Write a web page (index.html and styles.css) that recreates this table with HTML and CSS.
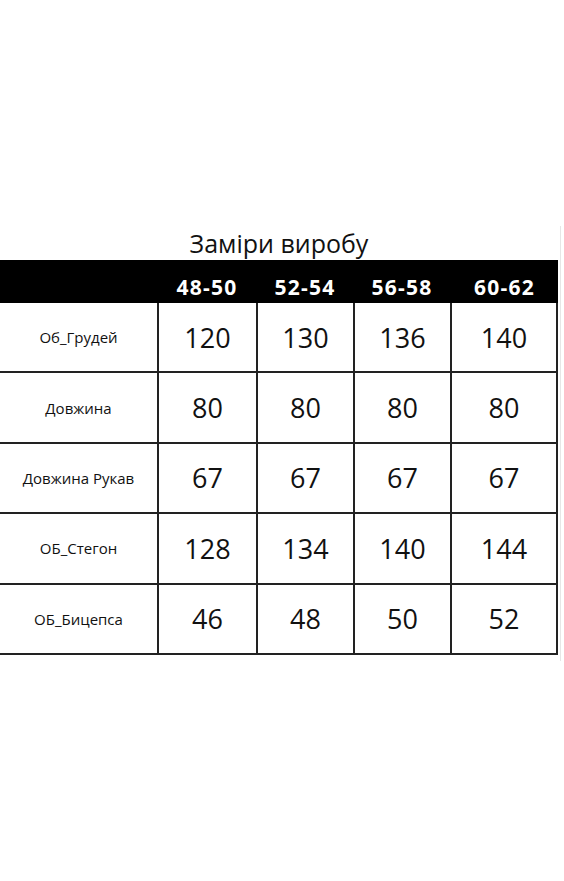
FILE: index.html
```html
<!DOCTYPE html>
<html lang="uk">
<head>
<meta charset="utf-8">
<link rel="stylesheet" href="styles.css">
</head>
<body>
<div class="page">
  <div class="sheet">
    <div class="title">Заміри виробу</div>
    <div class="head">
      <div></div>
      <div>48-50</div>
      <div>52-54</div>
      <div>56-58</div>
      <div>60-62</div>
    </div>
    <div class="row">
      <div class="label">Об_Грудей</div>
      <div class="num">120</div><div class="num">130</div><div class="num">136</div><div class="num">140</div>
    </div>
    <div class="row">
      <div class="label">Довжина</div>
      <div class="num">80</div><div class="num">80</div><div class="num">80</div><div class="num">80</div>
    </div>
    <div class="row">
      <div class="label">Довжина Рукав</div>
      <div class="num">67</div><div class="num">67</div><div class="num">67</div><div class="num">67</div>
    </div>
    <div class="row">
      <div class="label">ОБ_Стегон</div>
      <div class="num">128</div><div class="num">134</div><div class="num">140</div><div class="num">144</div>
    </div>
    <div class="row">
      <div class="label">ОБ_Бицепса</div>
      <div class="num">46</div><div class="num">48</div><div class="num">50</div><div class="num">52</div>
    </div>
  </div>
</div>
</body>
</html>
```
FILE: styles.css
```css
html, body {
  margin: 0;
  padding: 0;
  background: #fff;
}
body {
  font-family: "Open Sans", "Liberation Sans", sans-serif;
  color: #111;
}
.page {
  padding-top: 226px;
}
.sheet {
  width: 560px;
  padding-bottom: 6px;
  border-right: 1px solid #e6e6e6;
}
.title {
  width: 558px;
  height: 34px;
  line-height: 34px;
  text-align: center;
  font-size: 25px;
  color: #111;
}
.head {
  display: grid;
  grid-template-columns: 157px 99px 97px 97px 108px;
  width: 558px;
  height: 43px;
  background: #000;
  color: #fff;
  font-weight: 700;
  font-size: 21px;
  letter-spacing: 1.2px;
  align-items: end;
}
.head > div {
  text-align: center;
  padding-bottom: 2px;
  padding-left: 1px;
}
.row {
  display: grid;
  grid-template-columns: 157px 99px 97px 97px 108px;
  width: 558px;
  height: 70.4px;
  box-sizing: border-box;
  border-bottom: 2px solid #222;
  align-items: center;
}
.row > div {
  height: 100%;
  display: flex;
  align-items: center;
  justify-content: center;
  box-sizing: border-box;
}
.row > .num {
  border-left: 2px solid #222;
  font-size: 27px;
}
.row > .num:last-child {
  border-right: 2px solid #222;
}
.label {
  font-size: 15px;
}
```
